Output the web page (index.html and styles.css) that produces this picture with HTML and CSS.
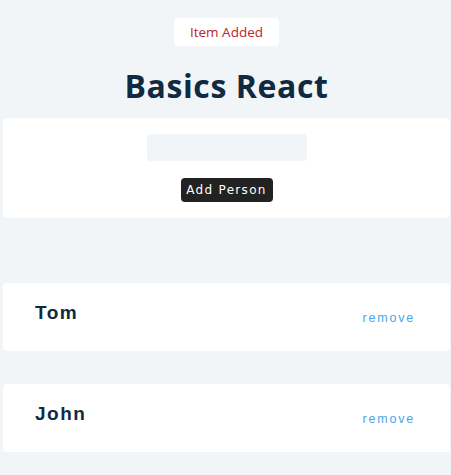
FILE: index.html
```html
<!DOCTYPE html>
<html>
<head>
<meta charset="utf-8">
<link rel="stylesheet" href="styles.css">
</head>
<body>
<main class="page">
  <div class="alert-row"><p class="alert">Item Added</p></div>
  <h1 class="title">Basics React</h1>
  <form class="form-card">
    <input class="field" type="text">
    <button class="btn" type="button">Add Person</button>
  </form>
  <section class="people">
    <article class="person">
      <h4 class="name">Tom</h4>
      <button class="remove" type="button">remove</button>
    </article>
    <article class="person">
      <h4 class="name">John</h4>
      <button class="remove" type="button">remove</button>
    </article>
  </section>
</main>
</body>
</html>
```
FILE: styles.css
```css
html, body {
  margin: 0;
  padding: 0;
  background: #f1f5f8;
}
body {
  font-family: "Open Sans", "Noto Sans", sans-serif;
  color: #102a42;
  height: 475px;
  overflow: hidden;
}
.page {
  margin: 0 1px 0 3px;
  display: flex;
  flex-direction: column;
}
.alert-row {
  display: flex;
  justify-content: center;
  padding-top: 18px;
}
.alert {
  margin: 0;
  background: #fff;
  color: #bb2525;
  font-size: 13.5px;
  line-height: 28px;
  height: 28px;
  padding: 0 16px;
  border-radius: 4px;
}
.title {
  margin: 18px 0 0;
  text-align: center;
  font-size: 32px;
  line-height: 44px;
  font-weight: 700;
  letter-spacing: 0.6px;
  height: 54px;
}
.form-card {
  background: #fff;
  border-radius: 4px;
  height: 100px;
  box-sizing: border-box;
  padding-top: 16px;
  display: flex;
  flex-direction: column;
  align-items: center;
}
.field {
  width: 160px;
  height: 27px;
  box-sizing: border-box;
  border: none;
  border-radius: 4px;
  background: #f1f5f8;
  margin: 0;
  padding: 0;
}
.btn {
  margin-top: 17px;
  height: 24px;
  width: 92px;
  padding: 0;
  border: none;
  border-radius: 4px;
  background: #222;
  color: #fff;
  font-family: "DejaVu Sans", sans-serif;
  font-size: 12px;
  letter-spacing: 1.3px;
}
.people {
  margin-top: 65px;
  display: flex;
  flex-direction: column;
  gap: 33px;
}
.person {
  background: #fff;
  border-radius: 4px;
  height: 68px;
  box-sizing: border-box;
  padding: 0 35px 0 32px;
  display: flex;
  justify-content: space-between;
  align-items: center;
}
.name {
  margin: 0 0 8px;
  font-family: "Liberation Sans", Arial, sans-serif;
  font-size: 19px;
  font-weight: 700;
  letter-spacing: 1.5px;
}
.remove {
  background: none;
  border: none;
  padding: 0;
  margin: 2px 0 0;
  color: #49a6e9;
  font-family: "Liberation Sans", Arial, sans-serif;
  font-size: 12.5px;
  letter-spacing: 1.8px;
}
```
